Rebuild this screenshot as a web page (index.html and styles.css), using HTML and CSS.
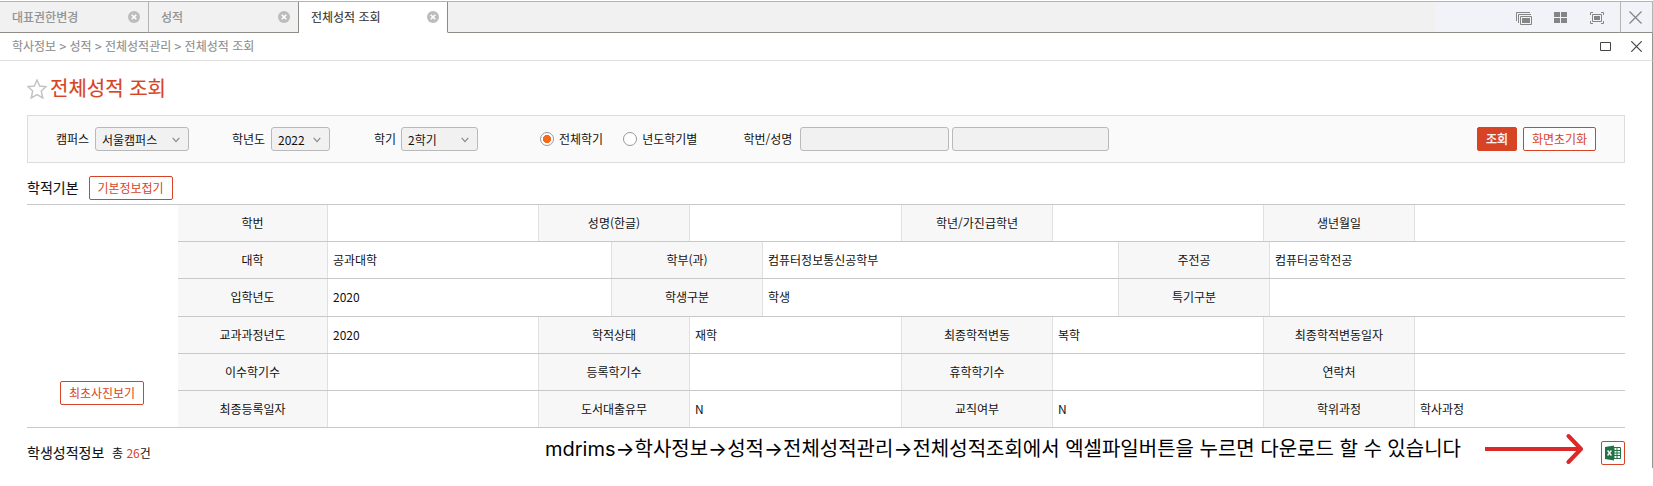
FILE: index.html
```html
<!DOCTYPE html>
<html lang="ko">
<head>
<meta charset="utf-8">
<title>전체성적 조회</title>
<link rel="stylesheet" href="styles.css">
</head>
<body>
<div class="window">
  <header class="tabbar">
    <div class="tab">대표권한변경<svg class="tab-close" viewBox="0 0 12 12"><circle cx="6" cy="6" r="6"/><path d="M3.7 3.7l4.6 4.6M8.3 3.7l-4.6 4.6"/></svg></div>
    <div class="tab">성적<svg class="tab-close" viewBox="0 0 12 12"><circle cx="6" cy="6" r="6"/><path d="M3.7 3.7l4.6 4.6M8.3 3.7l-4.6 4.6"/></svg></div>
    <div class="tab active">전체성적 조회<svg class="tab-close" viewBox="0 0 12 12"><circle cx="6" cy="6" r="6"/><path d="M3.7 3.7l4.6 4.6M8.3 3.7l-4.6 4.6"/></svg></div>
    <div class="tools">
      <svg width="16" height="13" viewBox="0 0 16 13"><path d="M.5 9V.5H14M2.5 11V2.5H15M4.5 4.5h11v8h-11z" fill="none" stroke="#858585"/><path d="M6 6h8v5H6z" fill="#858585"/></svg>
      <svg width="13" height="11" viewBox="0 0 13 11"><path d="M0 0h6v5H0zM7 0h6v5H7zM0 6h6v5H0zM7 6h6v5H7z" fill="#858585"/></svg>
      <svg width="14" height="12" viewBox="0 0 14 12"><path d="M.5 3V.5H3M11 .5h2.500V3M13.500 9v2.500H11M3 11.500H.5V9M2.500 2.500h9v7h-9z" fill="none" stroke="#858585"/><path d="M4 4h6v4H4z" fill="#858585"/></svg>
    </div>
    <div class="close-all"><svg width="13" height="13" viewBox="0 0 13 13"><path d="M.5.5l12 12M12.500.5l-12 12" stroke="#858585" stroke-width="1.300"/></svg></div>
  </header>

  <nav class="crumbs">
    <span>학사정보 &gt; 성적 &gt; 전체성적관리 &gt; 전체성적 조회</span>
    <div class="win-buttons">
      <svg width="11" height="9" viewBox="0 0 11 9"><path d="M.5.5h10v8H.5z" fill="none" stroke="#444"/></svg>
      <svg width="11" height="11" viewBox="0 0 11 11"><path d="M.3.3l10.400 10.400M10.700.3L.3 10.700" stroke="#444" stroke-width="1.200"/></svg>
    </div>
  </nav>

  <main class="content">
    <h1 class="title">
      <svg width="20" height="20" viewBox="0 0 20 20"><path d="M10 1l2.700 6 6.300.7-4.700 4.300 1.500 7L10 15.600 4.200 19l1.500-7L1 7.700 7.300 7z" fill="#fff" stroke="#c4c4c4" stroke-width="1.500"/></svg>
      <span>전체성적 조회</span>
    </h1>

    <section class="filter">
      <label class="label campus">캠퍼스</label>
      <div class="select campus-select">서울캠퍼스<svg class="chev" viewBox="0 0 8 6"><path d="M.7.8L4 4.600 7.300.8"/></svg></div>
      <label class="label year">학년도</label>
      <div class="select year-select">2022<svg class="chev" viewBox="0 0 8 6"><path d="M.7.8L4 4.600 7.300.8"/></svg></div>
      <label class="label term">학기</label>
      <div class="select term-select">2학기<svg class="chev" viewBox="0 0 8 6"><path d="M.7.8L4 4.600 7.300.8"/></svg></div>
      <span class="radio on"></span><span class="radio-text">전체학기</span>
      <span class="radio"></span><span class="radio-text">년도학기별</span>
      <label class="label who">학번/성명</label>
      <div class="input id-input"></div>
      <div class="input name-input"></div>
      <button class="btn solid">조회</button>
      <button class="btn reset">화면초기화</button>
    </section>

    <div class="section-head">
      <h2>학적기본</h2>
      <button class="btn fold">기본정보접기</button>
    </div>

    <section class="profile">
      <div class="photo"><button class="btn photo-btn">최초사진보기</button></div>
      <div class="rows">
        <div class="row four"><b>학번</b><i></i><b>성명(한글)</b><i></i><b>학년/가진급학년</b><i></i><b>생년월일</b><i></i></div>
        <div class="row three"><b>대학</b><i>공과대학</i><b>학부(과)</b><i>컴퓨터정보통신공학부</i><b>주전공</b><i>컴퓨터공학전공</i></div>
        <div class="row three tall"><b>입학년도</b><i>2020</i><b>학생구분</b><i>학생</i><b>특기구분</b><i></i></div>
        <div class="row four"><b>교과과정년도</b><i>2020</i><b>학적상태</b><i>재학</i><b>최종학적변동</b><i>복학</i><b>최종학적변동일자</b><i></i></div>
        <div class="row four"><b>이수학기수</b><i></i><b>등록학기수</b><i></i><b>휴학학기수</b><i></i><b>연락처</b><i></i></div>
        <div class="row four"><b>최종등록일자</b><i></i><b>도서대출유무</b><i>N</i><b>교직여부</b><i>N</i><b>학위과정</b><i>학사과정</i></div>
      </div>
    </section>

    <footer class="grades">
      <h2>학생성적정보</h2>
      <span class="count">총 <em>26</em>건</span>
      <p class="note"><span class="latin">mdrims→</span>학사정보<span class="latin">→</span>성적<span class="latin">→</span>전체성적관리<span class="latin">→</span>전체성적조회에서 엑셀파일버튼을 누르면 다운로드 할 수 있습니다</p>
      <svg class="arrow" width="98" height="32" viewBox="0 0 98 32"><path d="M0 16h94" stroke="#dc2828" stroke-width="4"/><path d="M83.500 3l12.500 13-12.500 13" fill="none" stroke="#dc2828" stroke-width="4" stroke-linecap="round" stroke-linejoin="round"/></svg>
      <button class="excel"><svg width="16" height="16" viewBox="0 0 16 16"><path d="M9 2.500h6.500v11H9z" fill="#fff" stroke="#217346"/><path d="M9 5.500h6M9 8h6M9 10.500h6M12 3v10" stroke="#217346"/><path d="M0 2l9-1.600v15.200L0 14z" fill="#217346"/><path d="M2.600 5.500l3.800 5M6.400 5.500l-3.800 5" stroke="#fff" stroke-width="1.300"/></svg></button>
    </footer>
  </main>
</div>
</body>
</html>
```
FILE: styles.css
```css
* { box-sizing: border-box; }
body {
  margin: 0;
  height: 486px;
  overflow: hidden;
  background: #fff;
  color: #111;
  font: 12px/18px "Noto Sans CJK KR", sans-serif;
}
h1, h2, p { margin: 0; }
svg { display: block; flex: none; }
.window { width: 1653px; height: 468px; padding-top: 1px; }

.tabbar {
  display: flex;
  height: 32px;
  background: #f1f1f1;
  border-top: 1px solid #b4b4b0;
}
.tab {
  display: flex;
  align-items: center;
  justify-content: space-between;
  width: 150px;
  padding: 0 8px 0 12px;
  border-right: 1px solid #b4b4b0;
  border-bottom: 1px solid #8e8c86;
  color: #8d8d8d;
  -webkit-text-stroke: 0.2px;
}
.tab:first-child { width: 149px; }
.tab:nth-child(2) { width: 150px; border-right-color: #8e8c86; }
.tab.active {
  width: 149px;
  background: #fff;
  border-right-color: #8e8c86;
  border-bottom-color: #fff;
  color: #333;
  -webkit-text-stroke: 0.1px;
}
.tab-close { width: 12px; height: 12px; }
.tab-close circle { fill: #bcbcbc; }
.tab-close path { stroke: #fff; stroke-width: 1.6; }
.tools {
  display: flex;
  flex: 1;
  gap: 22px;
  padding: 10px 0 0 1068px;
  background: linear-gradient(90deg, #f1f1f1 987px, #f2f3f8 987px);
  border-bottom: 1px solid #8e8c86;
}
.tools svg:last-child { margin-left: 1px; }
.close-all {
  width: 33px;
  padding: 9px 0 0 8px;
  background: #f2f3f8;
  border: solid #b4b4b0;
  border-width: 0 1px 0 1px;
  border-bottom: 1px solid #8e8c86;
}

.crumbs {
  display: flex;
  align-items: center;
  justify-content: space-between;
  height: 28px;
  padding: 0 10px 1px 12px;
  border-right: 1px solid #96948e;
  border-bottom: 1px solid #e0e0e0;
  color: #8d8d8d;
  -webkit-text-stroke: 0.1px;
}
.win-buttons { display: flex; align-items: center; gap: 20px; }

.content {
  height: 407px;
  padding: 17px 27px 0;
  border-right: 1px solid #96948e;
}
.title {
  display: flex;
  align-items: center;
  gap: 3px;
  height: 22px;
  color: #d74425;
  font-size: 20px;
  font-weight: 400;
  -webkit-text-stroke: 0.15px;
}
.title span { margin-top: -2px; }

.filter {
  display: flex;
  align-items: center;
  width: 1598px;
  height: 48px;
  margin-top: 15px;
  padding-left: 28px;
  border: 1px solid #ddd;
  background: #fafafa;
}
.label { flex: none; }
.campus { width: 39px; }
.year { width: 39px; margin-left: 43px; }
.term { width: 27px; margin-left: 44px; }
.select, .input {
  flex: none;
  height: 24px;
  border: 1px solid #b9b9b9;
  border-radius: 3px;
  background: #f1f1f1;
}
.select {
  display: flex;
  align-items: center;
  justify-content: space-between;
  padding: 1px 8px 0 6px;
}
.chev { width: 8px; height: 6px; fill: none; stroke: #8a8a8a; stroke-width: 1.2; }
.campus-select { width: 94px; }
.year-select { width: 59px; }
.term-select { width: 77px; }
.radio {
  flex: none;
  width: 14px;
  height: 14px;
  border: 1px solid #999;
  border-radius: 50%;
  background: #fff;
}
.radio.on {
  margin-left: 62px;
  background: radial-gradient(circle, #f26a1b 3.8px, #fff 4.4px);
}
.radio-text { flex: none; margin: -1px 0 0 5px; }
.radio-text + .radio { margin-left: 20px; }
.who { width: 57px; margin-left: 46px; }
.id-input { width: 149px; }
.name-input { width: 157px; margin-left: 3px; }

.btn {
  flex: none;
  height: 24px;
  padding: 0;
  border: 1px solid #d74425;
  border-radius: 2px;
  background: #fff;
  color: #d74425;
  font: inherit;
}
.solid {
  width: 40px;
  margin-left: auto;
  background: #d74425;
  color: #fff;
  -webkit-text-stroke: 0.3px;
}
.reset { width: 73px; margin: 0 28px 0 6px; }

.section-head { display: flex; align-items: center; height: 24px; margin-top: 13px; }
h2 { font-size: 14px; font-weight: 400; -webkit-text-stroke: 0.12px; }
.section-head h2 { margin-top: -2px; }
.fold { width: 84px; margin-left: 10px; }

.profile {
  display: flex;
  width: 1598px;
  height: 224px;
  margin-top: 4px;
  border: solid #c8c8c8;
  border-width: 1px 0;
}
.photo { width: 151px; padding: 176px 0 0 33px; }
.photo-btn { width: 84px; }
.rows { flex: 1; }
.row {
  display: grid;
  height: 37px;
  border-bottom: 1px solid #c8c8c8;
}
.row:last-child { height: 36px; border-bottom: 0; }
.tall { height: 38px; }
.four { grid-template-columns: 150px 210px 152px 211px 152px 210px 152px 210px; }
.three { grid-template-columns: 150px 283px 152px 355px 152px 355px; }
.row b, .row i {
  font-weight: 400;
  font-style: normal;
  line-height: 36px;
  white-space: nowrap;
}
.row b {
  border: solid #e0e0e0;
  border-width: 0 1px;
  background: #f7f7f7;
  text-align: center;
}
.row b:first-child { border-left: 0; }
.row i { padding-left: 5px; }

.grades { display: flex; height: 40px; }
.grades h2 { width: 85px; margin-top: 15px; }
.count { width: 433px; margin-top: 16px; }
.count em { color: #d74425; font-style: normal; }
.note {
  width: 940px;
  margin-top: 5px;
  color: #000;
  font-size: 20px;
  line-height: 30px;
  letter-spacing: -0.01px;
  white-space: nowrap;
}
.latin { font-family: Inter, sans-serif; }
.arrow { margin-top: 5px; }
.excel {
  display: grid;
  place-items: center;
  width: 24px;
  height: 24px;
  margin: 13px 0 0 18px;
  padding: 0;
  border: 1px solid #d74425;
  border-radius: 2px;
  background: #fff;
}
```
